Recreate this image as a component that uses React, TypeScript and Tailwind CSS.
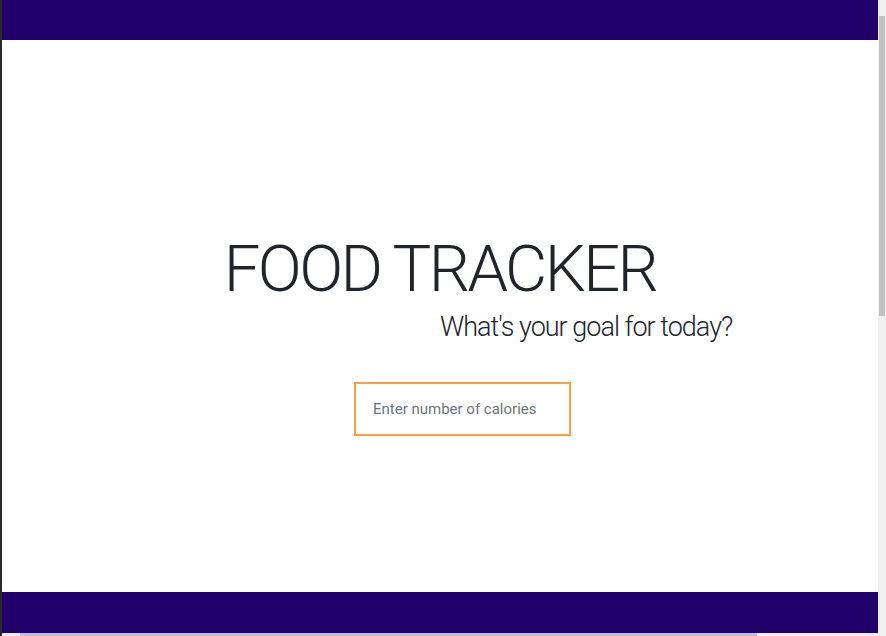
export default function App() {
  return (
    <div className="flex h-screen w-full overflow-hidden bg-white font-['Roboto',sans-serif] text-[#212529]">
      {/* left edge */}
      <div className="w-[2px] bg-[#2a2a2a]" />

      <div className="flex flex-1 flex-col">
        <header className="h-10 bg-[#22006b]" />

        <main className="flex flex-1 flex-col">
          <div className="pt-[197px] text-center">
            <h1 className="text-[65px] font-light leading-none tracking-[-2.6px]">FOOD TRACKER</h1>
          </div>
          <div className="grid grid-cols-2">
            <div />
            <p className="mt-[12px] text-[27px] font-light leading-none tracking-[-1px]">What's your goal for today?</p>
          </div>
          <div className="mt-[41px] pl-[352px]">
            <input
              type="text"
              placeholder="Enter number of calories"
              className="h-[54px] w-[217px] border-2 border-[#f7a046] px-[17px] text-[15px] text-[#212529] placeholder-[#6c757d] outline-none"
            />
          </div>
        </main>

        <footer className="h-[41px] bg-[#22006b]" />
        <div className="flex h-[3px] bg-[#f0f0f0] pl-[18px]">
          <div className="w-[737px] bg-[#c1c1c1]" />
        </div>
      </div>

      {/* vertical scrollbar */}
      <div className="flex w-[8px] flex-col bg-[#f0f0f0] px-px pt-[16px] pb-[12px]">
        <div className="h-[300px] w-full bg-[#c1c1c1]" />
      </div>
    </div>
  );
}
